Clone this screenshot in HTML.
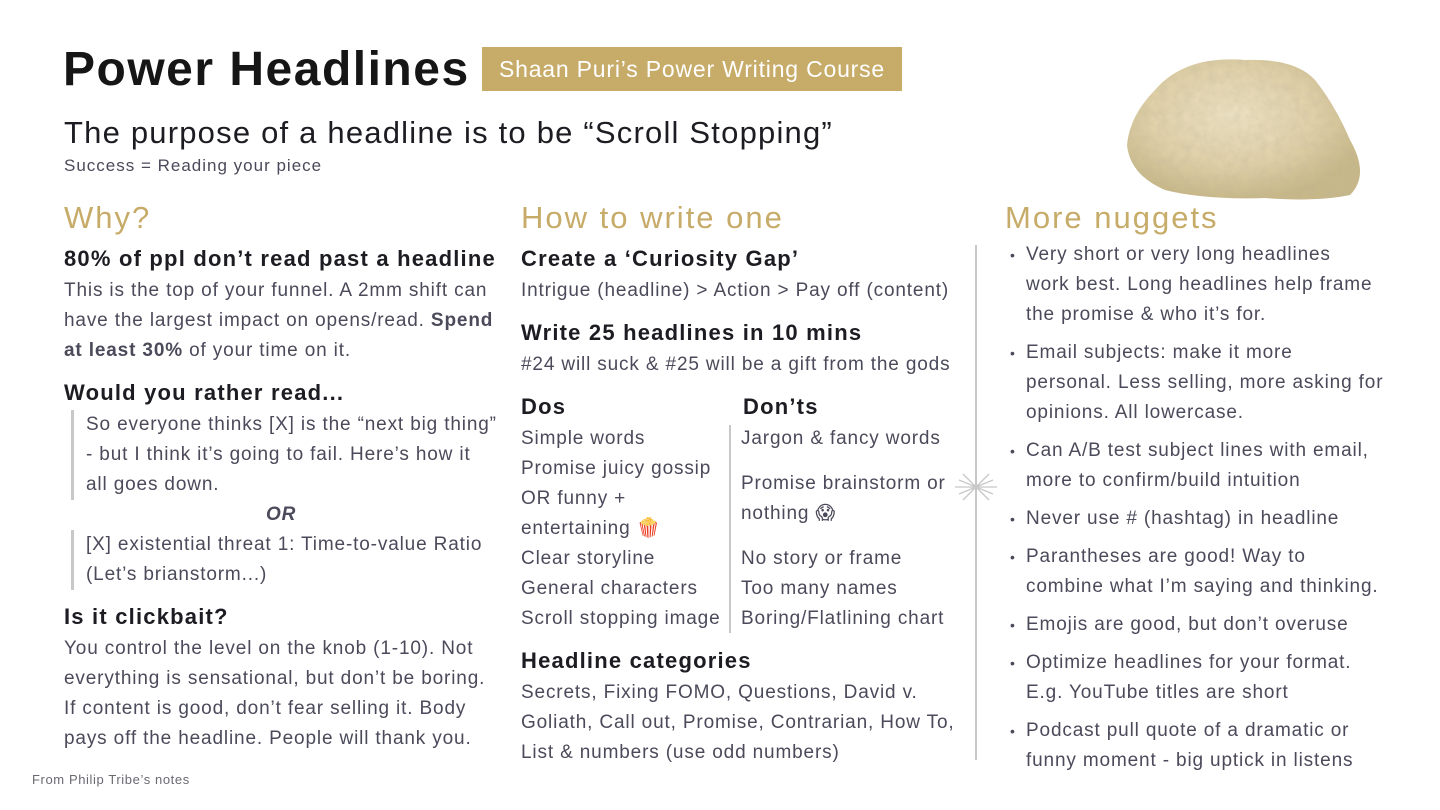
<!DOCTYPE html>
<html><head><meta charset="utf-8"><style>
*{margin:0;padding:0;box-sizing:border-box}
body{width:1440px;height:810px;background:#fff;position:relative;overflow:hidden;font-family:"Liberation Sans","DejaVu Sans",sans-serif;color:#4b4a5a}
.l{position:absolute;white-space:nowrap;font-size:19px;letter-spacing:0.85px;line-height:30px;height:30px}
.h{position:absolute;white-space:nowrap;font-size:22px;letter-spacing:1.2px;line-height:30px;font-weight:bold;color:#1c1c22}
.g{position:absolute;white-space:nowrap;font-size:31px;letter-spacing:2px;line-height:36px;color:#c7ab68}
.bar{position:absolute;background:#c8c8c8;width:3px}
b{color:#4b4a5a}
.dot{position:absolute;font-size:14px;line-height:30px;color:#4b4a5a}
</style></head><body>
<div style="position:absolute;left:63px;top:43px;font-size:48px;font-weight:900;color:#161616;letter-spacing:1.5px;line-height:54px">Power Headlines</div>
<div style="position:absolute;left:482px;top:47px;width:420px;height:44px;background:#c7ab68;color:#fff;font-size:23px;letter-spacing:0.8px;line-height:44px;text-align:center">Shaan Puri’s Power Writing Course</div>
<div style="position:absolute;left:64px;top:115px;font-size:31px;letter-spacing:1.2px;line-height:36px;color:#1c1c22;white-space:nowrap">The purpose of a headline is to be “Scroll Stopping”</div>
<div class="l" style="left:64px;top:151px;font-size:17px;letter-spacing:1px">Success = Reading your piece</div>

<svg style="position:absolute;left:1125px;top:50px" width="245" height="155" viewBox="0 0 245 155">
<defs><radialGradient id="r" cx="45%" cy="40%" r="60%"><stop offset="0" stop-color="#f2e6c8"/><stop offset="0.6" stop-color="#e3d3aa"/><stop offset="1" stop-color="#c9b887"/></radialGradient>
<filter id="t"><feTurbulence type="fractalNoise" baseFrequency="0.12" numOctaves="3" result="n"/><feColorMatrix in="n" type="matrix" values="0 0 0 0 0.5  0 0 0 0 0.45  0 0 0 0 0.3  0 0 0 0.45 0" result="c"/><feComposite in="c" in2="SourceGraphic" operator="in" result="m"/><feMerge><feMergeNode in="SourceGraphic"/><feMergeNode in="m"/></feMerge></filter></defs>
<path filter="url(#t)" d="M30 40 Q60 5 120 10 Q170 8 190 30 Q210 55 225 90 Q245 125 225 145 Q190 152 140 148 Q80 150 40 140 Q5 125 2 95 Q5 65 30 40Z" fill="url(#r)"/>
</svg>

<!-- col 1 -->
<div class="g" style="left:64px;top:200px">Why?</div>
<div class="h" style="left:64px;top:244px">80% of ppl don’t read past a headline</div>
<div class="l" style="left:64px;top:276px">This is the top of your funnel. A 2mm shift can</div>
<div class="l" style="left:64px;top:306px">have the largest impact on opens/read. <b>Spend</b></div>
<div class="l" style="left:64px;top:336px"><b>at least 30%</b> of your time on it.</div>
<div class="h" style="left:64px;top:378px">Would you rather read...</div>
<div class="bar" style="left:71px;top:410px;height:90px"></div>
<div class="l" style="left:86px;top:410px">So everyone thinks [X] is the “next big thing”</div>
<div class="l" style="left:86px;top:440px">- but I think it’s going to fail. Here’s how it</div>
<div class="l" style="left:86px;top:470px">all goes down.</div>
<div class="l" style="left:266px;top:500px;font-weight:bold;font-style:italic">OR</div>
<div class="bar" style="left:71px;top:530px;height:60px"></div>
<div class="l" style="left:86px;top:530px">[X] existential threat 1: Time-to-value Ratio</div>
<div class="l" style="left:86px;top:560px">(Let’s brianstorm...)</div>
<div class="h" style="left:64px;top:602px">Is it clickbait?</div>
<div class="l" style="left:64px;top:634px">You control the level on the knob (1-10). Not</div>
<div class="l" style="left:64px;top:664px">everything is sensational, but don’t be boring.</div>
<div class="l" style="left:64px;top:694px">If content is good, don’t fear selling it. Body</div>
<div class="l" style="left:64px;top:724px">pays off the headline. People will thank you.</div>
<div style="position:absolute;left:32px;top:772px;font-size:13px;letter-spacing:0.6px;color:#6a6a72">From Philip Tribe’s notes</div>

<!-- col 2 -->
<div class="g" style="left:521px;top:200px">How to write one</div>
<div class="h" style="left:521px;top:244px">Create a ‘Curiosity Gap’</div>
<div class="l" style="left:521px;top:276px">Intrigue (headline) &gt; Action &gt; Pay off (content)</div>
<div class="h" style="left:521px;top:318px">Write 25 headlines in 10 mins</div>
<div class="l" style="left:521px;top:350px">#24 will suck &amp; #25 will be a gift from the gods</div>
<div class="h" style="left:521px;top:392px">Dos</div>
<div class="h" style="left:743px;top:392px">Don’ts</div>
<div class="bar" style="left:729px;top:425px;height:208px;width:2px"></div>
<div class="l" style="left:521px;top:424px">Simple words</div>
<div class="l" style="left:521px;top:454px">Promise juicy gossip</div>
<div class="l" style="left:521px;top:484px">OR funny +</div>
<div class="l" style="left:521px;top:514px">entertaining 🍿</div>
<div class="l" style="left:521px;top:544px">Clear storyline</div>
<div class="l" style="left:521px;top:574px">General characters</div>
<div class="l" style="left:521px;top:604px">Scroll stopping image</div>
<div class="l" style="left:741px;top:424px">Jargon &amp; fancy words</div>
<div class="l" style="left:741px;top:469px">Promise brainstorm or</div>
<div class="l" style="left:741px;top:499px">nothing 😱</div>
<div class="l" style="left:741px;top:544px">No story or frame</div>
<div class="l" style="left:741px;top:574px">Too many names</div>
<div class="l" style="left:741px;top:604px">Boring/Flatlining chart</div>
<div class="h" style="left:521px;top:646px">Headline categories</div>
<div class="l" style="left:521px;top:678px">Secrets, Fixing FOMO, Questions, David v.</div>
<div class="l" style="left:521px;top:708px">Goliath, Call out, Promise, Contrarian, How To,</div>
<div class="l" style="left:521px;top:738px">List &amp; numbers (use odd numbers)</div>

<div class="bar" style="left:975px;top:245px;height:515px;width:2px"></div>
<svg style="position:absolute;left:955px;top:466px" width="42" height="42" viewBox="0 0 42 42" stroke="#c8c8c8" stroke-width="1.3">
<line x1="0" y1="21" x2="42" y2="21"/><line x1="21" y1="4" x2="21" y2="38"/><line x1="8" y1="8" x2="34" y2="34"/><line x1="34" y1="8" x2="8" y2="34"/><line x1="4" y1="14" x2="38" y2="28"/><line x1="4" y1="28" x2="38" y2="14"/></svg>

<!-- col 3 -->
<div class="g" style="left:1005px;top:200px">More nuggets</div>
<div class="dot" style="left:1010px;top:240px">•</div>
<div class="l" style="left:1026px;top:240px">Very short or very long headlines</div>
<div class="l" style="left:1026px;top:270px">work best. Long headlines help frame</div>
<div class="l" style="left:1026px;top:300px">the promise &amp; who it’s for.</div>
<div class="dot" style="left:1010px;top:338px">•</div>
<div class="l" style="left:1026px;top:338px">Email subjects: make it more</div>
<div class="l" style="left:1026px;top:368px">personal. Less selling, more asking for</div>
<div class="l" style="left:1026px;top:398px">opinions. All lowercase.</div>
<div class="dot" style="left:1010px;top:436px">•</div>
<div class="l" style="left:1026px;top:436px">Can A/B test subject lines with email,</div>
<div class="l" style="left:1026px;top:466px">more to confirm/build intuition</div>
<div class="dot" style="left:1010px;top:504px">•</div>
<div class="l" style="left:1026px;top:504px">Never use # (hashtag) in headline</div>
<div class="dot" style="left:1010px;top:542px">•</div>
<div class="l" style="left:1026px;top:542px">Parantheses are good! Way to</div>
<div class="l" style="left:1026px;top:572px">combine what I’m saying and thinking.</div>
<div class="dot" style="left:1010px;top:610px">•</div>
<div class="l" style="left:1026px;top:610px">Emojis are good, but don’t overuse</div>
<div class="dot" style="left:1010px;top:648px">•</div>
<div class="l" style="left:1026px;top:648px">Optimize headlines for your format.</div>
<div class="l" style="left:1026px;top:678px">E.g. YouTube titles are short</div>
<div class="dot" style="left:1010px;top:716px">•</div>
<div class="l" style="left:1026px;top:716px">Podcast pull quote of a dramatic or</div>
<div class="l" style="left:1026px;top:746px">funny moment - big uptick in listens</div>
</body></html>
